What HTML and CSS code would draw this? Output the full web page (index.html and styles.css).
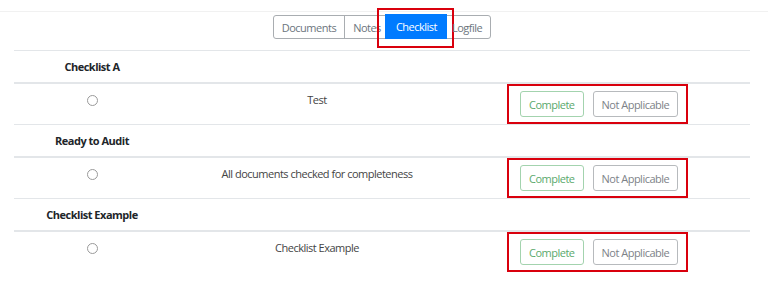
FILE: index.html
```html
<!DOCTYPE html>
<html>
<head>
    <title>Checklist</title>
    <link rel="stylesheet" href="styles.css">
</head>
<body>
    <div class="topbar"></div>

    <div class="tabs">
        <div class="btn-group">
            <a class="tab" href="#">Documents</a>
            <a class="tab tab-notes" href="#">Notes</a>
            <a class="tab active" href="#">Checklist<span class="mark-box"></span></a>
            <a class="tab" href="#">Logfile</a>
        </div>
    </div>

    <div class="checklist">
        <div class="group">
            <div class="group-head"><div class="col-title">Checklist A</div></div>
            <div class="item">
                <div class="col-check"><span class="radio"></span></div>
                <div class="col-text">Test</div>
                <div class="col-actions">
                    <div class="mark"><button class="btn btn-complete">Complete</button><button class="btn btn-na">Not Applicable</button></div>
                </div>
            </div>
        </div>
        <div class="group">
            <div class="group-head"><div class="col-title">Ready to Audit</div></div>
            <div class="item">
                <div class="col-check"><span class="radio"></span></div>
                <div class="col-text">All documents checked for completeness</div>
                <div class="col-actions">
                    <div class="mark"><button class="btn btn-complete">Complete</button><button class="btn btn-na">Not Applicable</button></div>
                </div>
            </div>
        </div>
        <div class="group">
            <div class="group-head"><div class="col-title">Checklist Example</div></div>
            <div class="item last">
                <div class="col-check"><span class="radio"></span></div>
                <div class="col-text">Checklist Example</div>
                <div class="col-actions">
                    <div class="mark"><button class="btn btn-complete">Complete</button><button class="btn btn-na">Not Applicable</button></div>
                </div>
            </div>
        </div>
    </div>
</body>
</html>
```

FILE: styles.css
```css
body {
    margin: 0;
    background: #fff;
    font-family: "Open Sans", sans-serif;
    font-size: 11px;
    letter-spacing: -0.5px;
    color: #212529;
}
.topbar {
    height: 11px;
    border-bottom: 1px solid #f1f1f1;
}
.tabs {
    display: flex;
    justify-content: center;
    padding: 3px 0 11px;
}
.btn-group {
    display: flex;
    height: 24px;
    border: 1px solid #a9adb1;
    border-radius: 3px;
    box-sizing: border-box;
    margin-left: -4px;
}
.tab {
    position: relative;
    display: flex;
    align-items: center;
    padding: 0 8px;
    color: #6c757d;
    text-decoration: none;
    border-right: 1px solid #a9adb1;
}
.tab:last-child {
    border-right: none;
    padding: 0 8px 0 5px;
}
.tab-notes {
    padding-right: 7px;
}
.tab.active {
    background: #007bff;
    color: #fff;
    margin: -2px 0 -1px -4px;
    padding: 0 10px 0 11px;
    border-right: none;
}
.mark-box {
    position: absolute;
    left: -8px;
    right: -7px;
    top: -6px;
    bottom: -9px;
    border: 2px solid #d9000d;
}
.checklist {
    margin: 0 18px 0 14px;
    border-top: 1px solid #e3e6e9;
}
.group-head {
    height: 31px;
    display: flex;
    align-items: center;
    border-bottom: 2px solid #e3e6e9;
}
.col-title {
    width: 156px;
    text-align: center;
    font-weight: 700;
}
.item {
    display: grid;
    grid-template-columns: 156px 294px 1fr;
    height: 40px;
    border-bottom: 1px solid #e3e6e9;
    color: #444;
}
.item.last {
    border-bottom: none;
}
.col-check {
    display: flex;
    justify-content: center;
    padding-top: 11px;
}
.radio {
    width: 9px;
    height: 9px;
    border: 1px solid #9a9a9a;
    border-radius: 50%;
}
.col-text {
    text-align: center;
    padding-top: 8px;
    line-height: 16px;
}
.col-actions {
    padding-left: 43px;
}
.mark {
    display: inline-flex;
    gap: 9px;
    height: 40px;
    box-sizing: border-box;
    padding: 5px 8px 0 11px;
    border: 2px solid #d9000d;
}
.btn {
    height: 26px;
    padding: 0 8px;
    font-family: inherit;
    font-size: 11px;
    letter-spacing: -0.5px;
    background: #fff;
    border-radius: 3px;
}
.btn-complete {
    color: #5aa96c;
    border: 1px solid #a3d3ae;
}
.btn-na {
    color: #7d8288;
    border: 1px solid #b7babd;
}
```
